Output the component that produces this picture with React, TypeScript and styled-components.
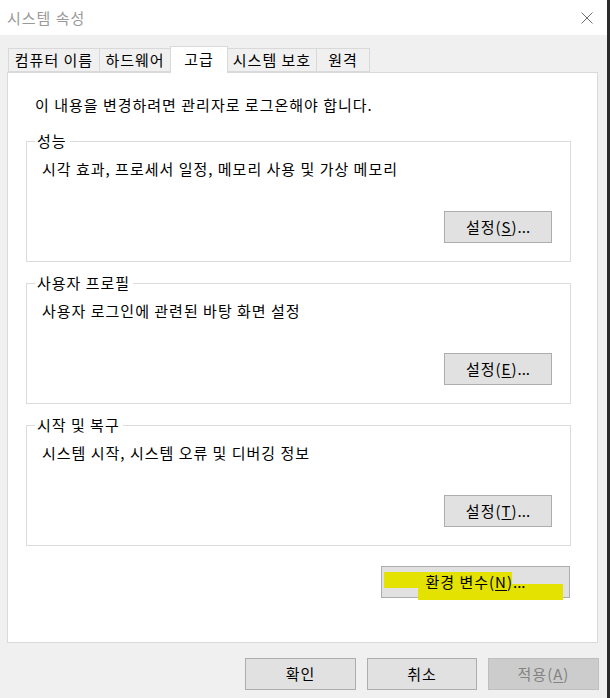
import * as React from 'react';
import styled, { createGlobalStyle } from 'styled-components';

const FONT = '"Noto Sans CJK KR", "Noto Sans", sans-serif';

const GlobalStyle = createGlobalStyle`
  html, body {
    margin: 0;
    padding: 0;
    background: #f0f0f0;
  }
  body {
    font-family: ${FONT};
    font-size: 15px;
    letter-spacing: 1px;
    color: #000;
  }
`;

const Screen = styled.div`
  display: flex;
  width: 610px;
  height: 698px;
  overflow: hidden;
  background: #f0f0f0;
`;

const Window = styled.div`
  flex: 1;
  display: flex;
  flex-direction: column;
  min-width: 0;
`;

const EdgeStrip = styled.div`
  width: 3px;
  background: #2b2b2b;
`;

const TitleBar = styled.header`
  display: flex;
  align-items: center;
  justify-content: space-between;
  height: 35px;
  padding: 0 14px 0 7px;
  background: #ffffff;
`;

const Title = styled.span`
  font-size: 15px;
  line-height: 20px;
  color: #9a9a9a;
`;

const CloseIcon = styled.svg`
  display: block;
  width: 12px;
  height: 12px;
`;

const Body = styled.div`
  display: flex;
  flex-direction: column;
  padding: 11px 8px 0 7px;
`;

const TabRow = styled.div`
  display: flex;
  align-items: flex-end;
  height: 26px;
  padding-left: 1px;
  position: relative;
  z-index: 1;
`;

const Tab = styled.div<{ $active?: boolean; $w: number }>`
  box-sizing: border-box;
  display: flex;
  align-items: center;
  justify-content: center;
  width: ${(p) => p.$w}px;
  height: ${(p) => (p.$active ? '27px' : '24px')};
  margin-bottom: ${(p) => (p.$active ? '-1px' : '0')};
  margin-left: -1px;
  padding-bottom: ${(p) => (p.$active ? '3px' : '0')};
  border: 1px solid #d9d9d9;
  border-bottom: ${(p) => (p.$active ? 'none' : '1px solid #d9d9d9')};
  background: ${(p) => (p.$active ? '#ffffff' : '#f0f0f0')};
  line-height: 20px;
  white-space: nowrap;
  &:first-child {
    margin-left: 0;
  }
`;

const Panel = styled.section`
  box-sizing: border-box;
  width: 591px;
  height: 571px;
  display: flex;
  flex-direction: column;
  padding: 22px 26px 0 18px;
  background: #ffffff;
  border: 1px solid #d9d9d9;
`;

const Notice = styled.p`
  margin: 0 0 16px;
  padding-left: 9px;
  line-height: 20px;
`;

const Groups = styled.div`
  display: flex;
  flex-direction: column;
  gap: 11px;
`;

const Group = styled.fieldset`
  margin: 0;
  padding: 8px 18px 18px 0;
  min-width: 0;
  border: 1px solid #dcdcdc;
  display: flex;
  flex-direction: column;
`;

const Legend = styled.legend`
  margin-left: 8px;
  padding: 0 3px 0 2px;
  line-height: 20px;
`;

const Description = styled.div`
  padding-left: 15px;
  line-height: 20px;
`;

const Button = styled.button<{ $width: number }>`
  box-sizing: border-box;
  width: ${(p) => p.$width}px;
  height: 32px;
  padding: 0;
  border: 1px solid #adadad;
  background: #e1e1e1;
  font-family: ${FONT};
  font-size: 15px;
  letter-spacing: 1px;
  line-height: 20px;
  color: #000;
  position: relative;
  &:disabled {
    background: #cccccc;
    border-color: #bfbfbf;
    color: #838383;
  }
`;

const GroupButton = styled(Button)`
  align-self: flex-end;
  margin-top: 32px;
`;

const EnvRow = styled.div`
  display: flex;
  justify-content: flex-end;
  margin-top: 20px;
  padding-right: 1px;
`;

const ButtonLabel = styled.span`
  position: relative;
  z-index: 2;
`;

const Key = styled.u`
  text-underline-offset: 2px;
`;

const Dots = styled.span`
  letter-spacing: 0;
`;

/* highlighter marks drawn over the button */
const Marker = styled.span<{ $l: number; $t: number; $w: number; $h: number }>`
  position: absolute;
  left: ${(p) => p.$l}px;
  top: ${(p) => p.$t}px;
  width: ${(p) => p.$w}px;
  height: ${(p) => p.$h}px;
  background: #e3e200;
  z-index: 1;
`;

const Footer = styled.div`
  display: flex;
  justify-content: flex-end;
  gap: 11px;
  margin-top: 15px;
`;

const groups = [
  { title: '성능', text: '시각 효과, 프로세서 일정, 메모리 사용 및 가상 메모리', key: 'S' },
  { title: '사용자 프로필', text: '사용자 로그인에 관련된 바탕 화면 설정', key: 'E' },
  { title: '시작 및 복구', text: '시스템 시작, 시스템 오류 및 디버깅 정보', key: 'T' },
];

const tabs = [
  { label: '컴퓨터 이름', w: 92 },
  { label: '하드웨어', w: 72 },
  { label: '고급', w: 58, active: true },
  { label: '시스템 보호', w: 90 },
  { label: '원격', w: 54 },
];

export default function App() {
  return (
    <Screen>
      <GlobalStyle />
      <Window>
        <TitleBar>
          <Title>시스템 속성</Title>
          <CloseIcon viewBox="0 0 12 12">
            <path d="M0.5 0.5 L11.5 11.5 M11.5 0.5 L0.5 11.5" stroke="#6e6e6e" strokeWidth="1" fill="none" />
          </CloseIcon>
        </TitleBar>
        <Body>
          <TabRow>
            {tabs.map((t) => (
              <Tab key={t.label} $active={t.active} $w={t.w}>
                {t.label}
              </Tab>
            ))}
          </TabRow>
          <Panel>
            <Notice>이 내용을 변경하려면 관리자로 로그온해야 합니다.</Notice>
            <Groups>
              {groups.map((g) => (
                <Group key={g.title}>
                  <Legend>{g.title}</Legend>
                  <Description>{g.text}</Description>
                  <GroupButton $width={108}>
                    설정(<Key>{g.key}</Key>)<Dots>...</Dots>
                  </GroupButton>
                </Group>
              ))}
            </Groups>
            <EnvRow>
              <Button $width={189}>
                <Marker $l={2} $t={5} $w={128} $h={16} />
                <Marker $l={36} $t={20} $w={145} $h={13} />
                <Marker $l={130} $t={17} $w={51} $h={4} />
                <ButtonLabel>
                  환경 변수(<Key>N</Key>)<Dots>...</Dots>
                </ButtonLabel>
              </Button>
            </EnvRow>
          </Panel>
          <Footer>
            <Button $width={111}>확인</Button>
            <Button $width={110}>취소</Button>
            <Button $width={111} disabled>
              적용(<Key>A</Key>)
            </Button>
          </Footer>
        </Body>
      </Window>
      <EdgeStrip />
    </Screen>
  );
}
